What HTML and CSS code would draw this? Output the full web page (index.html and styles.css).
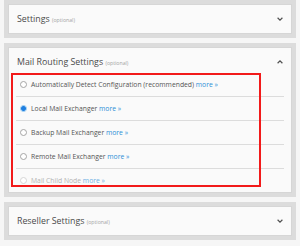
FILE: index.html
```html
<!DOCTYPE html>
<html lang="en">
<head>
<meta charset="utf-8">
<title>Mail Routing Settings</title>
<link rel="stylesheet" href="styles.css">
</head>
<body>
<div class="page">
  <section class="panel">
    <header class="panel-head">
      <h2 class="panel-title">Settings <small>(optional)</small></h2>
      <svg class="chev" width="6" height="4" viewBox="0 0 6 4"><path d="M0.6 0.8 L3 3.1 L5.4 0.8" fill="none" stroke="#505050" stroke-width="1.2"/></svg>
    </header>
  </section>

  <section class="panel open">
    <header class="panel-head">
      <h2 class="panel-title">Mail Routing Settings <small>(optional)</small></h2>
      <svg class="chev" width="6" height="4" viewBox="0 0 6 4"><path d="M0.6 3.2 L3 0.9 L5.4 3.2" fill="none" stroke="#505050" stroke-width="1.2"/></svg>
    </header>
    <div class="panel-body">
      <ul class="options">
        <li class="option"><span class="radio"></span><span class="label">Automatically Detect Configuration (recommended) <a class="more" href="#">more »</a></span></li>
        <li class="option"><span class="radio checked"></span><span class="label">Local Mail Exchanger <a class="more" href="#">more »</a></span></li>
        <li class="option"><span class="radio"></span><span class="label">Backup Mail Exchanger <a class="more" href="#">more »</a></span></li>
        <li class="option"><span class="radio"></span><span class="label">Remote Mail Exchanger <a class="more" href="#">more »</a></span></li>
        <li class="option disabled"><span class="radio"></span><span class="label">Mail Child Node <a class="more" href="#">more »</a></span></li>
      </ul>
      <div class="highlight"></div>
    </div>
  </section>

  <section class="panel">
    <header class="panel-head">
      <h2 class="panel-title">Reseller Settings <small>(optional)</small></h2>
      <svg class="chev" width="6" height="4" viewBox="0 0 6 4"><path d="M0.6 0.8 L3 3.1 L5.4 0.8" fill="none" stroke="#505050" stroke-width="1.2"/></svg>
    </header>
  </section>
</div>
</body>
</html>
```

FILE: styles.css
```css
* { box-sizing: border-box; }
html, body {
  margin: 0;
  padding: 0;
  background: #f6f6f6;
  font-family: "Open Sans", "Liberation Sans", sans-serif;
}
.page {
  padding: 0 4px;
  display: flex;
  flex-direction: column;
  gap: 5px;
}
.panel {
  border: 4px solid #dcdcdc;
  background: #fafafa;
  box-shadow: inset 0 0 0 1px #d6d6d6;
}
.panel-head {
  height: 30px;
  display: flex;
  align-items: center;
  justify-content: space-between;
  padding: 0 9px 0 9px;
}
.panel-title {
  margin: 0;
  font-size: 8.8px;
  font-weight: 400;
  color: #4a4a4a;
  white-space: nowrap;
}
.panel-title small {
  font-size: 5.2px;
  color: #a3a3a3;
}
.chev { display: block; }
.panel-body {
  position: relative;
  margin-top: -4px;
  padding: 0 8px 1px;
}
.options {
  list-style: none;
  margin: 0;
  padding: 0;
}
.option {
  height: 24px;
  display: flex;
  align-items: center;
  border-bottom: 1px solid #dcdcdc;
  font-size: 6.8px;
  color: #555;
  white-space: nowrap;
}
.option:last-child {
  height: 23px;
  border-bottom: 0;
}
.radio {
  width: 7px;
  height: 7px;
  margin: 0 4px 0 4px;
  border-radius: 50%;
  border: 1px solid #a5a5a5;
  background: #fff;
  flex: none;
}
.radio.checked {
  border: 1px solid #8cc4f0;
  background: radial-gradient(circle, #1f7fe0 0 2.3px, #fff 2.6px);
}
.more {
  color: #2c8fd6;
  text-decoration: none;
}
.option.disabled { color: #b4b4b4; }
.option.disabled .radio { border-color: #d6d6d6; }
.option.disabled .more { color: #6fb0e4; }
.highlight {
  position: absolute;
  left: 3px;
  top: 0;
  width: 250px;
  height: 114px;
  border: 2px solid #f21a1a;
  pointer-events: none;
}
```
